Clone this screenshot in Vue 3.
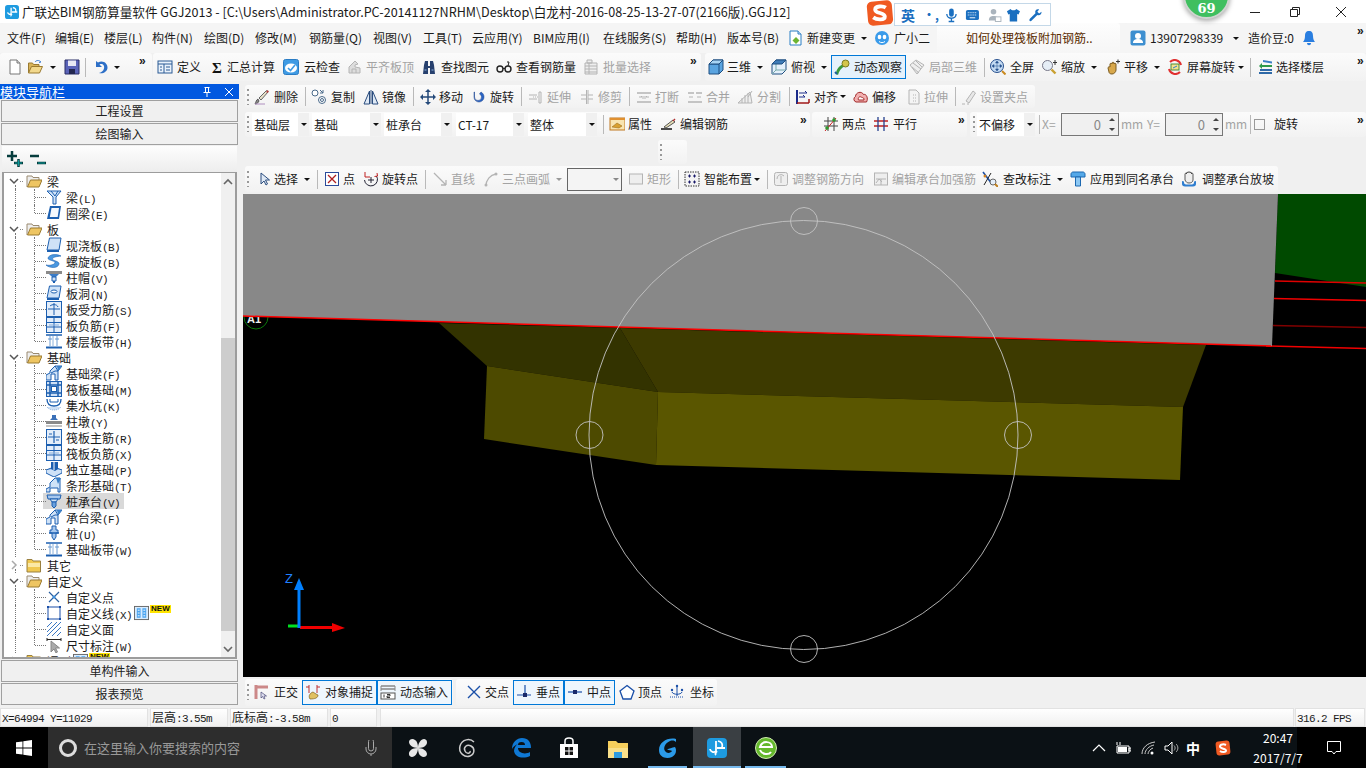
<template>
  <div class="app">
    <!-- title bar -->
    <header class="titlebar">
      <svg class="app-icon" viewBox="0 0 16 16" v-html="icons.glodon"></svg>
      <span class="title-text">广联达BIM钢筋算量软件 GGJ2013 - [C:\Users\Administrator.PC-20141127NRHM\Desktop\白龙村-2016-08-25-13-27-07(2166版).GGJ12]</span>
      <div class="win-btns">
        <svg viewBox="0 0 12 12" width="12" height="12"><path d="M1 6.5h10" stroke="#222" fill="none"/></svg>
        <svg viewBox="0 0 12 12" width="12" height="12"><path d="M1.5 3.5h7v7h-7zM3.5 3.5v-2h7v7h-2" stroke="#222" fill="none"/></svg>
        <svg viewBox="0 0 12 12" width="12" height="12"><path d="M1 1l10 10M11 1L1 11" stroke="#222" fill="none"/></svg>
      </div>
    </header>

    <!-- sogou input bar floats over the title -->
    <div class="ime">
      <svg class="ime-logo" viewBox="0 0 28 28">
        <rect x="1" y="1" width="26" height="25" rx="5" fill="#f05a22" transform="rotate(-5 14 14)"/>
        <path d="M20 8c-3-2-11-2-11 2s10 3 10 7-8 4-12 1" fill="none" stroke="#fff" stroke-width="4"/>
      </svg>
      <div class="ime-box">
        <span class="ime-en">英</span>
        <span class="ime-dot">•,</span>
        <svg viewBox="0 0 16 16" v-html="icons.imeMic"></svg>
        <svg viewBox="0 0 16 16" v-html="icons.imeKey"></svg>
        <svg viewBox="0 0 16 16" v-html="icons.imeUser"></svg>
        <svg viewBox="0 0 16 16" v-html="icons.imeShirt"></svg>
        <svg viewBox="0 0 16 16" v-html="icons.imeTool"></svg>
      </div>
    </div>
    <div class="score">69</div>

    <!-- all tool rows, placed in the grid by row -->
    <div
      v-for="row in toolRows"
      :key="row.id"
      class="row"
      :class="row.id"
      :style="{ gridRow: row.r, gridColumn: row.full ? '1 / 3' : '2' }"
    >
      <div
        v-for="(bar, bi) in row.bars"
        :key="bi"
        class="bar"
        :class="bar.cls"
        :style="{ marginLeft: bar.ml + 'px', width: bar.to - bar.from + 'px', paddingLeft: bar.pl + 'px' }"
      >
        <template v-for="(it, i) in bar.items" :key="i">
          <div
            class="item"
            :class="[it.kind, { off: it.off, on: it.on, plain: it.plain }]"
            :style="{ width: it.w + 'px', marginRight: it.mr + 'px' }"
          >
            <template v-if="it.kind === 'btn'">
              <span class="slot" :style="{ width: it.tx + 'px' }">
                <svg class="ico" viewBox="0 0 16 16" v-html="icons[it.icon]"></svg>
              </span>
              <span class="label">{{ it.text }}</span>
            </template>
            <span v-else-if="it.kind === 'text'" class="label" :style="{ color: it.color }">{{ it.text }}</span>
            <i v-else-if="it.kind === 'caret'" class="tri"></i>
            <i v-else-if="it.kind === 'sep'" class="sepline"></i>
            <i v-else-if="it.kind === 'grip'" class="dots"></i>
            <span v-else-if="it.kind === 'more'" class="chev">»</span>
            <template v-else-if="it.kind === 'combo'">
              <span class="combo-text">{{ it.text }}</span>
              <span class="combo-btn"><i class="tri"></i></span>
            </template>
            <template v-else-if="it.kind === 'spin'">
              <span class="spin-val">0</span>
              <span class="spin-btn"><i class="up"></i><i class="down"></i></span>
            </template>
            <i v-else-if="it.kind === 'check'" class="checkbox"></i>
          </div>
        </template>
      </div>
    </div>

    <!-- left navigation panel -->
    <aside class="nav">
      <div class="nav-head">
        <span>模块导航栏</span>
        <svg viewBox="0 0 12 12" width="12" height="12" class="pin"><path d="M3.5 1.5h5M4.5 1.5v5h3v-5M2.5 6.5h7M6 6.5v4.5" stroke="#fff" fill="none"/></svg>
        <svg viewBox="0 0 12 12" width="12" height="12"><path d="M2 2l8 8M10 2l-8 8" stroke="#fff" fill="none"/></svg>
      </div>
      <div class="nav-btn">工程设置</div>
      <div class="nav-btn">绘图输入</div>
      <div class="tree-tools">
        <svg viewBox="0 0 16 16" width="16" height="16"><path d="M0 5h10M5 0v10M7 12h9M11.500 8v8" stroke="#063d3d" stroke-width="2.500" fill="none"/><path d="M8 12h7M11.500 9v6" stroke="#0a9a9a" stroke-width="1" fill="none"/></svg>
        <svg viewBox="0 0 16 16" width="16" height="16"><path d="M0 5h9M7 12h9" stroke="#063d3d" stroke-width="2.500" fill="none"/><path d="M8 12h7" stroke="#0a9a9a" stroke-width="1"/></svg>
      </div>
      <div class="tree-box">
        <div class="tree-list">
          <div v-for="(n, i) in treeRows" :key="i" class="tree-row" :class="{ leaf: n.leaf, last: n.last, sel: n.sel }">
            <template v-if="n.leaf">
              <i class="line-v1"></i><i class="line-v2"></i><i class="line-h"></i>
              <span class="leaf-wrap" :class="{ sel: n.sel }">
                <svg class="ico" viewBox="0 0 16 16" v-html="icons[n.icon]"></svg>
                <span class="leaf-text">{{ n.label }}<span class="mono">{{ n.key }}</span></span>
              </span>
              <template v-if="n.isNew">
                <svg class="new-ico" viewBox="0 0 16 16" v-html="icons.newBox"></svg>
                <span class="new-tag">NEW</span>
              </template>
            </template>
            <template v-else>
              <i v-if="n.line" class="line-v1 cat"></i>
              <svg class="chevron" viewBox="0 0 10 10" width="10" height="10">
                <path :d="n.open ? 'M1 3l4 4 4-4' : 'M3 1l4 4-4 4'" fill="none" :stroke="n.open ? '#555' : '#aaa'" stroke-width="1.5"/>
              </svg>
              <i class="cat-dot"></i>
              <svg class="ico" viewBox="0 0 16 16" v-html="n.open ? icons.folderOpen : icons.folder"></svg>
              <span class="cat-text">{{ n.label }}</span>
              <template v-if="n.isNew">
                <svg class="new-ico" viewBox="0 0 16 16" v-html="icons.newBox"></svg>
                <span class="new-tag">NEW</span>
              </template>
            </template>
          </div>
        </div>
        <div class="scrollbar">
          <svg viewBox="0 0 10 10" width="10" height="10" class="sb-up"><path d="M1 7l4-4 4 4" fill="none" stroke="#666" stroke-width="1.6"/></svg>
          <div class="thumb"></div>
          <svg viewBox="0 0 10 10" width="10" height="10" class="sb-down"><path d="M1 3l4 4 4-4" fill="none" stroke="#666" stroke-width="1.6"/></svg>
        </div>
      </div>
      <div class="nav-btn">单构件输入</div>
      <div class="nav-btn">报表预览</div>
    </aside>

    <!-- 3D view -->
    <main class="view">
      <svg viewBox="243 194 1123 483" width="1123" height="483">
        <circle cx="256" cy="317" r="12" fill="none" stroke="#0a7a0a"/>
        <text x="247" y="323" class="axis-a">A1</text>
        <polygon points="1278,194 1366,194 1366,287 1275,273" fill="#004a00"/>
        <g stroke-width="1.500" fill="none">
          <path d="M1275 281L1366 283" stroke="#e00000"/>
          <path d="M1274 298.500L1366 300.500" stroke="#f00000"/>
          <path d="M1273 325.500L1366 327.500" stroke="#800000"/>
          <path d="M1266 346L1366 348.500" stroke="#f00000"/>
        </g>
        <polygon points="439,323 487,366 658,392 620,328" fill="#333300"/>
        <polygon points="620,328 1206,345 1183,407 658,392" fill="#3d3a00"/>
        <polygon points="487,366 658,392 656,465 484,439" fill="#4d4a00"/>
        <polygon points="658,392 1183,407 1180,480 656,465" fill="#5a5600"/>
        <polygon points="243,194 1278,194 1272,346 243,316" fill="#888888"/>
        <path d="M243 316L1272 346" stroke="#ff0000" stroke-width="1.500" fill="none"/>
        <g fill="none" stroke="#c4c4c4" stroke-width=".9">
          <circle cx="803.500" cy="435" r="214.500"/>
          <circle cx="804" cy="221" r="13.500"/>
          <circle cx="804" cy="649" r="13.500"/>
          <circle cx="589.500" cy="435" r="13.500"/>
          <circle cx="1018" cy="435" r="13.500"/>
        </g>
        <!-- axis gizmo -->
        <text x="285" y="583" class="axis-z">Z</text>
        <path d="M288 626h12" stroke="#00e020" stroke-width="3"/>
        <path d="M300 627.500h32" stroke="#f00000" stroke-width="3"/>
        <polygon points="332,623 345,628 332,632" fill="#f00000"/>
        <path d="M299 628V590" stroke="#0080ff" stroke-width="3"/>
        <polygon points="299,578 304,590 294,590" fill="#0080ff"/>
      </svg>
    </main>

    <!-- status bar -->
    <footer class="status">
      <div v-for="c in statusCells" :key="c.left" class="cell" :class="c.cls" :style="{ width: c.w + 'px', marginLeft: c.ml + 'px' }">
        <span v-if="c.cjk" class="cell-cjk">{{ c.cjk }}</span><span class="mono">{{ c.text }}</span>
      </div>
    </footer>

    <!-- windows taskbar -->
    <div class="taskbar">
      <div class="start">
        <svg viewBox="0 0 16 16" width="16" height="16"><path d="M0 2.300l6.500-.9v6.200H0zM7.300 1.300L16 0v7.600H7.300zM0 8.400h6.500v6.200L0 13.700zM7.300 8.400H16V16l-8.700-1.300z" fill="#fff"/></svg>
      </div>
      <div class="search">
        <i class="cortana"></i>
        <span>在这里输入你要搜索的内容</span>
        <svg viewBox="0 0 16 16" width="16" height="16" class="mic"><path d="M5.500 1.500a2.500 2.500 0 015 0v7a2.500 2.500 0 01-5 0zM3 7v2a5 5 0 0010 0V7M8 14v2" fill="none" stroke="#aaa"/></svg>
      </div>
      <div class="task-icons">
        <div v-for="a in taskApps" :key="a.id" class="task-app" :class="{ active: a.active, open: a.open }" :style="{ width: a.w + 'px', marginLeft: a.ml + 'px' }">
          <svg viewBox="0 0 24 24" width="24" height="24" v-html="icons[a.id]"></svg>
        </div>
      </div>
      <div class="tray">
        <svg viewBox="0 0 14 14" width="14" height="14" class="t1"><path d="M1 10l6-6 6 6" fill="none" stroke="#fff" stroke-width="1.200"/></svg>
        <svg viewBox="0 0 18 14" width="18" height="14" class="t2"><path d="M4 5h12v7H4z" fill="none" stroke="#fff"/><path d="M5 6h9v5H5z" fill="#fff"/><path d="M16 7h2v3h-2zM4 1v3M7 1v3" stroke="#fff" fill="none"/></svg>
        <svg viewBox="0 0 16 14" width="16" height="14" class="t3"><path d="M1 13c0-6 5-11 13-12M4 13c0-4 4-8 9-9M7 13c0-2 2-5 5-6" fill="none" stroke="#ccc"/><circle cx="11" cy="12" r="1.500" fill="#fff"/></svg>
        <svg viewBox="0 0 16 14" width="16" height="14" class="t4"><path d="M1 5h3l4-4v12l-4-4H1z" fill="none" stroke="#fff"/><path d="M10 4.500c1.500 1.500 1.500 3.500 0 5M12 3c2.500 2 2.500 6 0 8" fill="none" stroke="#aaa"/></svg>
        <span class="t5">中</span>
        <svg viewBox="0 0 16 16" width="16" height="16" class="t6"><rect x="1" y="1" width="14" height="14" rx="3" fill="#f05a22" transform="rotate(-6 8 8)"/><path d="M11 5c-2-1-6-1-6 1.500S11 8.500 11 10.500 7 12.500 5 11" fill="none" stroke="#fff" stroke-width="2"/></svg>
        <div class="clock"><span>20:47</span><span>2017/7/7</span></div>
        <div class="notify">
          <svg viewBox="0 0 16 16" width="16" height="16"><path d="M1.500 1.500h13v10h-4.500L8 14l-2-2.500H1.500z" fill="none" stroke="#fff"/></svg>
        </div>
      </div>
    </div>
  </div>
</template>

<script setup>
const B = '#1c5fb0'
const L = '#cfe2f7'
const G = '#b4b4b4'

// inline drawings of the toolbar, tree and taskbar icons
const icons = {
  glodon: `<rect x="0" y="0" width="16" height="16" rx="3" fill="#1e9be0"/><path d="M7 3v7a2.500 2.500 0 01-4-1.500M8 8h6M9 3c3 .5 4 2 3 5M7 13c-.5-1 0-2 1-3" fill="none" stroke="#fff" stroke-width="1.500"/>`,
  imeMic: `<rect x="5.500" y="1" width="5" height="9" rx="2.500" fill="#1a6fc0"/><path d="M3 7c0 6 10 6 10 0M8 12v3M5 15h6" fill="none" stroke="#1a6fc0" stroke-width="1.400"/>`,
  imeKey: `<rect x="1" y="2.500" width="14" height="11" rx="2" fill="#1a6fc0"/><path d="M3 5.500h10M3 8h10" stroke="#fff" stroke-dasharray="1 1"/><path d="M5 11h6" stroke="#fff"/>`,
  imeUser: `<circle cx="7" cy="4.500" r="3" fill="#aab4bd"/><path d="M2 14c0-4 2-5 5-5s5 1 5 5z" fill="#aab4bd"/><rect x="9" y="10" width="6" height="5" fill="#fff" stroke="#aab4bd"/>`,
  imeShirt: `<path d="M5 1.500L1 4l1.500 3.500L4 7v8h8V7l1.500.5L15 4l-4-2.500c-.500 2-5.500 2-6 0z" fill="#1a6fc0"/>`,
  imeTool: `<path d="M14.500 4.500l-2.500 2-2-2 2-2.500c-3-1-5 1.500-4 4L2 12c-1.500 2 .500 3.500 2 2l6-6c2.500 1 5-1 4.500-3.500z" fill="#1a6fc0"/>`,

  // file and edit
  doc: `<path d="M3 1h7l3 3v11H3z" fill="#fff" stroke="#777"/><path d="M10 1v3h3" fill="#ddd" stroke="#777"/>`,
  open: `<path d="M1.500 14V4h4l1 1.500h5.500V8" fill="#d8b45a" stroke="#9a7a30"/><path d="M1.500 14l3-6.500h11l-3 6.500z" fill="#f2d88c" stroke="#9a7a30"/><path d="M8 3c1.500-2 4-2 6 0l-2 .5" fill="none" stroke="#3a7bd0"/>`,
  save: `<path d="M1 1h14v14H1z" fill="#5a63b8" stroke="#2b2f66"/><path d="M4 1.500h8v5.500H4z" fill="#e8e8f4"/><path d="M5 10h6v5H5z" fill="#22264f"/>`,
  undo: `<path d="M3 2v6h6L6.500 5.500C9 4 12 6 11 9.500 10.500 12 8 13.500 6 14c4 1 8-1 8.500-5C15 4 9.500.500 5 3.500z" fill="#2d6fc7"/>`,
  define: `<rect x="1" y="2" width="14" height="12" fill="#eaf2fb" stroke="#2a5a94"/><path d="M1 5h14M7 5v9M9 8h4M9 11h4M3 8h2M3 11h2" stroke="#2a5a94" fill="none"/>`,
  sigma: `<text x="2" y="14" font-size="15" font-weight="700" font-family="Liberation Serif, serif" fill="#111">Σ</text>`,
  cloud: `<rect x=".500" y=".500" width="15" height="15" rx="2" fill="#3f9be4" stroke="#2a7cc4"/><ellipse cx="8" cy="9" rx="6" ry="4.500" fill="#fff"/><path d="M5 9l2.500 2.500L12 6" fill="none" stroke="#3f9be4" stroke-width="1.600"/>`,
  flat: `<path d="M2 14V8l6-6 3 3-3 1v2l5 1v5z" fill="#ddd" stroke="${G}"/><path d="M5 14v-4h4v4" fill="none" stroke="${G}"/>`,
  binoc: `<path d="M2 15l1-9 1-4h3v5h2V2h3l1 4 1 9h-5V9H7v6z" fill="#27406e"/><path d="M3.500 11h2M10.500 11h2" stroke="#8fb3e0"/>`,
  glasses: `<circle cx="4" cy="10" r="3" fill="none" stroke="#222" stroke-width="1.400"/><circle cx="12" cy="10" r="3" fill="none" stroke="#222" stroke-width="1.400"/><path d="M7 9.500h2M12 7l1-4h-2" fill="none" stroke="#222"/>`,
  batch: `<path d="M3 1h5v3H3zM1 4h12v11H1z" fill="#eee" stroke="${G}"/><path d="M1 7h12M1 10h12M1 13h12M5 4v11" stroke="${G}"/>`,
  cube: `<path d="M1 5l4-4h10v10l-4 4H1z" fill="#5aa4e0" stroke="#1e4e80"/><path d="M1 5h10v10M11 5l4-4" fill="none" stroke="#1e4e80"/><path d="M1 5l4-4h10l-4 4z" fill="#a8d4f4"/><path d="M1 5l4-4h10l-4 4z" fill="none" stroke="#1e4e80"/>`,
  cubeTop: `<path d="M1 5l4-4h10v10l-4 4H1z" fill="#e4f0fb" stroke="#1e4e80"/><path d="M5 1v10h10M5 11l-4 4" fill="none" stroke="#7aa"/><path d="M1 5l4-4h10l-4 4z" fill="#3f7cb8" stroke="#1e4e80"/>`,
  orbit: `<path d="M2 15c0-5 4-9 8-10l1 2c-4 2-6 5-7 9z" fill="#3b9a3b"/><circle cx="11.500" cy="4.500" r="3.500" fill="#d4c54a" stroke="#7a7a20"/><path d="M3 15L1 13" stroke="#1e5e9e" stroke-width="2"/>`,
  local3d: `<path d="M1 6l6-5 8 5-7 9z" fill="#eee" stroke="${G}"/><path d="M4 4l8 6M7 2l6 6M3 8l7 6" stroke="${G}"/>`,
  full: `<circle cx="7" cy="7" r="6.500" fill="#c4dbf3" stroke="#27508e"/><path d="M7 2.500v9M2.500 7h9M7 2l-1.500 2h3zM7 12l-1.500-2h3zM2 7l2-1.500v3zM12 7l-2-1.500v3z" fill="#27508e" stroke="#27508e" stroke-width=".5"/><path d="M12 12l3.500 3.500" stroke="#c98a20" stroke-width="2"/>`,
  zoomI: `<circle cx="6.500" cy="6.500" r="5" fill="#e6eef6" stroke="#778"/><path d="M10.500 10.500l4 4" stroke="#c9a030" stroke-width="2.400"/><path d="M14 1v5M12 3.500h4" stroke="#333"/>`,
  pan: `<path d="M3 9c0-1 1-1.500 2-1V5c0-1 2-1 2 0V4c0-1 2-1 2 0v1c0-1 2-1 2 0v6c0 2-2 4-4 4s-3-1-3-2z" fill="#d8a84c" stroke="#7a5a20"/><path d="M13 .500v4M11 2.500h4" stroke="#333"/>`,
  spinI: `<path d="M3 3a6.500 6.500 0 0111 3" fill="none" stroke="#e03030" stroke-width="2"/><path d="M13 13a6.500 6.500 0 01-11-3" fill="none" stroke="#e03030" stroke-width="2"/><rect x="4" y="5" width="8" height="6" fill="#f4e28c" stroke="#4a8a3a"/><path d="M6 9l4-2" stroke="#2a80d0"/>`,
  floors: `<path d="M5 1l9 1.500v2l-9-1.500z" fill="#3b7ec4"/><path d="M2 6h12v2H2z" fill="#2f9a4a"/><path d="M2 10h12v2H2zM1 13h13v2H1z" fill="#2f6aa8"/><path d="M1 7l3-3v6z" fill="#2f9a4a"/>`,

  // edit row
  brush: `<path d="M1 15c2 0 3-1 4-3l-1-2c-2 1-2 3-3 5z" fill="#888" stroke="#222" stroke-width=".6"/><path d="M5 9l2 2 7-8-1.500-1.500z" fill="#e8e0c8" stroke="#666"/><path d="M12 3l1.500-2L15 2.500 13.500 4z" fill="#b04040"/><path d="M1 15h10" stroke="#b090c0"/>`,
  copy: `<circle cx="4" cy="4" r="3" fill="#fff" stroke="#4a6a8a"/><circle cx="11" cy="11" r="3.500" fill="#fff" stroke="#4a6a8a"/><circle cx="11" cy="11" r="1.500" fill="none" stroke="#4a6a8a"/><path d="M9 1l3 3M12 1v3h-3" stroke="#4a6a8a" fill="none"/>`,
  mirror: `<path d="M1 15L6.500 2v13zM15 15L9.500 2v13z" fill="#dfe9f5" stroke="#2b4d7e"/><path d="M8 1v14" stroke="#2b4d7e"/>`,
  move: `<path d="M8 1v14M1 8h14" stroke="#254a7a" stroke-width="1.500"/><path d="M8 0l-3 3h6zM8 16l-3-3h6zM0 8l3-3v6zM16 8l-3-3v6z" fill="#254a7a"/>`,
  rot: `<path d="M3 3v5a5 5 0 0010 0c0-2-1-4-3-5l-1.500 2c1.500 1 2 2 2 3a3.500 3.500 0 01-7 0V3z" fill="#2a64c4" stroke="#1a408a" stroke-width=".5"/>`,
  extend: `<path d="M1 6h8M1 10h8M11 3h2v11h-2z" fill="none" stroke="${G}"/><path d="M5 8h5" stroke="${G}" stroke-dasharray="1 1"/>`,
  trim: `<path d="M2 6h5M2 10h5M9 6h5M9 10h5M7.500 1v14M9 1v14" fill="none" stroke="${G}"/>`,
  brk: `<path d="M1 4h14M1 13h14" stroke="${G}" stroke-width="1.500"/><path d="M3 8h3l-1-1M13 8h-3l1-1M7 7v3M9 7v3" fill="none" stroke="${G}"/>`,
  merge: `<path d="M1 4h6M9 4h6M1 13h14" stroke="${G}" stroke-width="1.500"/><path d="M2 8h4M14 8h-4" fill="none" stroke="${G}"/>`,
  split: `<path d="M1 14h14L13 3 1 14z" fill="#eee" stroke="${G}"/><path d="M5 14V9M8 14V6M11 14V4M11 8l4-6" stroke="${G}"/>`,
  align: `<path d="M2 1v14" stroke="#1a2a8a" stroke-width="2"/><path d="M2 14h12M14 10v4" stroke="#a01818" stroke-width="1.500"/><path d="M4 4h8l-2-2M4 8h6l-2-2" fill="none" stroke="#1a2a8a"/>`,
  offset: `<path d="M3 13a3 3 0 01-.5-5.500c0-4 6-6 8-2 3-1 5 4 3 7.500z" fill="#f2b0b0" stroke="#a02828"/><path d="M5.500 11c-1-2 1-4 2.500-3s3 0 3 3z" fill="#fff" stroke="#a02828"/>`,
  stretch: `<path d="M3 1h7l3 3v11H3z" fill="#f4f4f4" stroke="${G}"/><path d="M7 6h3M7 9h3M7 12h3" stroke="${G}" stroke-dasharray="1 1"/>`,
  setgrip: `<path d="M1 15h3M6 15h2" stroke="${G}"/><path d="M5 12l7-10 2.500 2L8 14z" fill="#e8e8e8" stroke="${G}"/>`,

  // property row
  prop: `<rect x="1" y="2" width="15" height="12" fill="#f8e4b0" stroke="#c07820"/><path d="M1 2h15v2H1z" fill="#e09030"/><path d="M3 11l5-4 5 3-3 2z" fill="#d8a030" stroke="#906010" stroke-width=".5"/>`,
  editbar: `<path d="M1 13h11" stroke="#111" stroke-width="1.500"/><path d="M4 11l9-7 2 2-9 6z" fill="#e8e0b8" stroke="#555"/><path d="M12.500 4.500l2-2 1 1-2 2z" fill="#b03030"/>`,
  twoPt: `<path d="M1 5h14M1 10h14M5 1v14M11 1v14" stroke="#444"/><path d="M2 15L13 2" stroke="#d02020"/><circle cx="4" cy="12" r="1.800" fill="#2f9a2f"/><circle cx="11" cy="4" r="1.800" fill="#2f9a2f"/>`,
  para: `<path d="M1 5h14M1 10h14" stroke="#c02020" stroke-width="1.300"/><path d="M5 1v14M11 1v14" stroke="#27408e" stroke-width="1.300"/>`,

  // draw row
  arrow: `<path d="M5 2v11l3-3 2 4 1.500-1-2-4h4z" fill="#dfe9f5" stroke="#2b4d7e"/>`,
  point: `<rect x="1.500" y="1.500" width="13" height="13" fill="#fff" stroke="#2a4a9a"/><path d="M4 4l8 8M12 4l-8 8" stroke="#b02020" stroke-width="1.300"/>`,
  rotPt: `<path d="M13.500 5A6.500 6.500 0 111.500 9" fill="none" stroke="#223"/><path d="M8 6v6M5 9h6" stroke="#223"/><path d="M2 1v5h5M14 2l.5 3-3 .5" fill="none" stroke="#c02020"/>`,
  lineI: `<path d="M2 2l12 12M14 14V9M14 14H9" fill="none" stroke="${G}" stroke-width="1.300"/>`,
  arcI: `<path d="M3 15c0-6 4-11 10-12" fill="none" stroke="${G}" stroke-width="1.300"/><circle cx="3" cy="14" r="1.500" fill="${G}"/><circle cx="13" cy="3" r="1.500" fill="${G}"/>`,
  rectI: `<rect x="1.500" y="3" width="13" height="10" fill="#eee" stroke="${G}"/>`,
  smart: `<rect x="1" y="1" width="14" height="14" fill="#f4f4f4" stroke="#333" stroke-dasharray="1.500 1"/><path d="M4 5h3M5.500 3.500v3M9 5h3M10.500 3.500v3M4 11h3M5.500 9.500v3M9 11h3M10.500 9.500v3" stroke="#1a1a6a"/>`,
  adjBar: `<rect x="1.500" y="1.500" width="13" height="13" rx="2" fill="#eee" stroke="${G}"/><path d="M4 8a4 4 0 017-3M8 5v7" fill="none" stroke="${G}"/>`,
  adjCap: `<rect x="1.500" y="2" width="13" height="12" fill="#eee" stroke="${G}"/><path d="M3 12l3-4 3 3M8 8v6M3 8h10" fill="none" stroke="${G}"/>`,
  checkMark: `<path d="M1 1l9 12" stroke="#1a4fa8" stroke-width="1.500"/><path d="M9 2L2 14" stroke="#222"/><circle cx="3" cy="5" r="1.500" fill="#d08020"/><circle cx="11" cy="11" r="3" fill="#e4eefa" stroke="#666"/><path d="M13 13l3 3" stroke="#c08020" stroke-width="2"/>`,
  applyCap: `<path d="M1 3c0-1 1-2 2-2h10c1 0 2 1 2 2v3H1z" fill="#54a8e8" stroke="#1c68b0"/><path d="M5.500 6h5v9h-5z" fill="#8cc8f4" stroke="#1c68b0"/>`,
  hand: `<path d="M4 9V3c0-1 1.500-1 1.500 0V2c0-1 1.500-1 1.500 0v-.5C7 .500 9 .500 9 1.500V2c0-1 1.500-1 1.500 0v1c0-1 1.500-1 1.500 0v6c0 2-2 3-4 3s-3-1-4-3z" fill="#eee" stroke="#333" stroke-width=".8"/><path d="M1 10v3c0 1.500 1 2.500 3 2.500h8c2 0 3-1 3-2.500v-3l-2 .5v1c0 1-1 2-2 2H5c-1 0-2-1-2-2v-1z" fill="#2f7ed0"/>`,

  // snap row
  ortho: `<path d="M3 1v14" stroke="#c88" stroke-width="3"/><path d="M2 3h13" stroke="#c88" stroke-width="3"/><path d="M8 8v6l1.500-1.500L11 15l1-.5-1-2.500h2.500z" fill="#dde" stroke="#336" stroke-width=".6"/>`,
  snapI: `<path d="M4 1v8M12 1v8M1 3h3M12 3h3" stroke="#c03030"/><path d="M5 15c-2-3 0-6 3-7l3 2 2 1c0 3-3 4-8 4z" fill="#e0c060" stroke="#806020" stroke-width=".7"/>`,
  dyn: `<path d="M1 2h14M1 5h14" stroke="#888" stroke-width="1.300"/><path d="M1 2v5M15 2v5" stroke="#888"/><rect x="1" y="9" width="14" height="6" fill="#fff" stroke="#555"/><path d="M4 10.500v3M7 10.500h3v1.500h-3v1.500h3" fill="none" stroke="#222" stroke-width=".9"/>`,
  crossPt: `<path d="M2 2l12 12M14 2L2 14" stroke="#1a4fa8" stroke-width="1.400"/>`,
  perp: `<path d="M1 11h14M9 1v10" stroke="#1a4fa8" stroke-width="1.200"/><rect x="7" y="9" width="4" height="4" fill="#1a2a6a"/>`,
  mid: `<path d="M1 8h14" stroke="#1a4fa8" stroke-width="1.200"/><rect x="6" y="6" width="4" height="4" fill="#1a2a6a"/>`,
  vertex: `<path d="M8 1.500L15 7l-3 8H4L1 7z" fill="#fff" stroke="#1a4fa8" stroke-width="1.300"/>`,
  coord: `<path d="M8 3v9M3 8c1 3 9 3 10 0" fill="none" stroke="#1a4fa8"/><path d="M1 13h14" stroke="#1a4fa8" stroke-dasharray="1 1"/><circle cx="3" cy="6" r="1.200" fill="#1a4fa8"/><circle cx="13" cy="6" r="1.200" fill="#1a4fa8"/><circle cx="8" cy="2" r="1.200" fill="#1a4fa8"/>`,

  // menu row
  newChange: `<path d="M2 1h8l3 3v11H2z" fill="#fff" stroke="#2a7ec4"/><path d="M10 1v3h3" fill="#cfe2f7" stroke="#2a7ec4"/><path d="M8 7l3.500 3.500L8 14l-3.500-3.500z" fill="#6cb432"/>`,
  robot: `<circle cx="8" cy="8" r="7" fill="#3a9bea"/><ellipse cx="5.500" cy="7" rx="1.800" ry="2.200" fill="#fff"/><ellipse cx="10.500" cy="7" rx="1.800" ry="2.200" fill="#fff"/><path d="M5 11.500c2 1.500 4 1.500 6 0" fill="none" stroke="#fff"/>`,
  user: `<rect x=".500" y=".500" width="15" height="15" rx="2" fill="#3d8fd0"/><circle cx="8" cy="6" r="3" fill="#fff"/><path d="M3 13c0-3 2-4 5-4s5 1 5 4z" fill="#fff"/>`,
  bell: `<path d="M8 1c-3 0-4 2-4 5 0 3-1 5-2 6h12c-1-1-2-3-2-6 0-3-1-5-4-5zM6 13c0 3 4 3 4 0z" fill="#2a7ee0"/>`,

  // tree
  folder: `<path d="M1 5V2.500h5L7 4h7.500v11H1z" fill="#f0c850" stroke="#9a8040"/><path d="M2 6h12v4H2z" fill="#fbe9a6"/>`,
  folderOpen: `<path d="M1 14V3h5l1 1.500h6V7" fill="#eee" stroke="#9a8a70"/><path d="M1.500 14l3-7H16l-3 7z" fill="#eec562" stroke="#9a7a30"/>`,
  beam: `<path d="M1 2h14l-5 6v7H7V8z" fill="${L}" stroke="${B}"/><path d="M5 2l4 5M12 2L9 7" stroke="${B}"/>`,
  ring: `<path d="M4 1h11l-2 13H1z" fill="${B}"/><path d="M5.500 3H13l-1.300 9H3.800z" fill="#f4f8fd"/>`,
  cast: `<path d="M3.500 1H15l-2 12H1z" fill="${L}" stroke="${B}"/><path d="M1 13h12v2H1z" fill="${B}"/>`,
  spiral: `<path d="M15 3C10 .5 3 1.500 2 5c-.5 2.500 7 2.500 7 4.500S4 13 0 12c3 3 12 4 13-1 .5-3-6.500-3-6.500-5S11 3.500 15 3z" fill="#4a98e0" stroke="${B}" stroke-width=".6"/>`,
  capital: `<path d="M0 2h16v3H0z" fill="#8a8a8a"/><path d="M3 5h10l-3 3H6z" fill="#3a7cc8"/><path d="M6 8h4v4H6z" fill="${L}" stroke="${B}"/><path d="M7 12h2v2H7z" fill="${B}"/>`,
  hole: `<path d="M3.500 1H15l-2 12H1z" fill="${L}" stroke="${B}"/><ellipse cx="8" cy="6.500" rx="3" ry="1.500" fill="#fff" stroke="${B}"/><path d="M1 13h12v2H1z" fill="${B}"/>`,
  slabBar: `<rect x=".500" y=".500" width="15" height="15" fill="#e4eefa" stroke="${B}"/><path d="M8 2v12M2 8h12M4 5c2-2 7-2 8 1" fill="none" stroke="${B}"/>`,
  negBar: `<rect x=".500" y=".500" width="15" height="15" fill="#e4eefa" stroke="${B}"/><path d="M1 5.500h14M1 10h14M8 1v14" fill="none" stroke="${B}"/><path d="M3 8h10" stroke="#8ab0dc"/>`,
  strip: `<path d="M0 2h16" stroke="${B}" stroke-width="1.500"/><path d="M0 14.500h16" stroke="${B}" stroke-width="2"/><path d="M4 3v10M11 3v10M2 6h4M9 6h4" stroke="#6a9ad0"/><path d="M7 3v10" stroke="#8ab0dc"/>`,
  fBeam: `<path d="M0 15V10l4-2V6l5-5h7l-4 5v9H9V9H5v6z" fill="${L}" stroke="${B}"/><path d="M9 1l3 5M12 6h-3L5 8" fill="none" stroke="${B}"/><path d="M11 1h5l-4 5z" fill="#3a80c8"/>`,
  raft: `<rect x=".500" y=".500" width="15" height="15" fill="#cfe0f5" stroke="${B}"/><path d="M4 1v14M12 1v14M1 4h14M1 12h14" stroke="${B}" stroke-width="1.500"/><rect x="5.500" y="5.500" width="5" height="5" fill="#fff" stroke="${B}"/>`,
  pit: `<path d="M1 2c0 5 2 7 7 7s7-2 7-7" fill="none" stroke="${B}" stroke-width="1.300"/><path d="M4 2v3h8V2" fill="none" stroke="${B}"/><path d="M1 10c3 4 11 4 14 0" fill="#cfe0f5" stroke="#8ab0dc" stroke-dasharray="1 1"/>`,
  pier: `<path d="M6 2h4v3l2 2H4l2-2z" fill="#3a70b8"/><path d="M0 8h16v3H0z" fill="#8a8a8a"/><path d="M0 13h16" stroke="#888"/>`,
  mainBar: `<rect x=".500" y=".500" width="15" height="15" fill="#e4eefa" stroke="${B}"/><path d="M8 2v12M2 8h12M3 5h3M10 11h3" fill="none" stroke="${B}" stroke-width="1.200"/>`,
  isolated: `<path d="M0 9l8-3 8 3-8 4z" fill="#a8c8ee" stroke="${B}"/><path d="M0 9v3l8 4 8-4V9" fill="${L}" stroke="${B}"/><path d="M5 1h7v7l-3 2-4-2z" fill="${B}"/><path d="M8 1v8" stroke="#fff"/>`,
  stripFoot: `<path d="M0 15v-3l4-2V6l5-5h5v14h-2V11H4v4z" fill="${L}" stroke="${B}"/><path d="M10 1h5l-3 6z" fill="#3a80c8"/>`,
  capI: `<path d="M1 2h14l-1 4H2z" fill="#a8c8ee" stroke="${B}"/><path d="M4 6h8l-2 3H6z" fill="${L}" stroke="${B}"/><path d="M6 9h4v4l-2 2-2-2z" fill="#6aa0dc" stroke="${B}"/>`,
  pile: `<path d="M6 1h4v4h2v3h-2v4l-2 3-2-3V8H4V5h2z" fill="#a8c8ee" stroke="${B}"/><path d="M3 8h10" stroke="${B}" stroke-width="1.500"/>`,
  custPt: `<path d="M3 3l10 10M13 3L3 13" stroke="#2a5fa0" stroke-width="1.200"/><circle cx="8" cy="8" r="1.500" fill="#3a90e0"/>`,
  custLine: `<rect x="2" y="2" width="12" height="12" fill="none" stroke="#1a4fa8"/><path d="M1 1h2v2H1zM13 1h2v2h-2zM1 13h2v2H1zM13 13h2v2h-2z" fill="#1a4fa8"/>`,
  custFace: `<path d="M1 6l5-5M1 11L11 1M1 15L15 1M6 15l9-9M11 15l4-4" stroke="#3a78c4"/>`,
  dim: `<path d="M1 1v3M15 1v3M1 2.500h14" stroke="#222"/><path d="M5 4v11l3-3 2 4 1.500-1-2-4h4z" fill="#aaa" stroke="#888"/>`,
  newBox: `<rect x=".500" y="1" width="15" height="14" fill="#d8ecff" stroke="#666"/><path d="M3 3h4v10H3zM9 3h4v10H9z" fill="#4aa4f0"/><path d="M4 5h2M4 8h2M4 11h2M10 5h2M10 8h2M10 11h2" stroke="#fff"/>`,

  // taskbar
  fan: `<path d="M12 12C7 12 3 9 3 6c0-3 4-4 6-2 2 1 3 4 3 8zM12 12c0-5 3-9 6-9 3 0 4 4 2 6-1 2-4 3-8 3zM12 12c5 0 9 3 9 6 0 3-4 4-6 2-2-1-3-4-3-8zM12 12c0 5-3 9-6 9-3 0-4-4-2-6 1-2 4-3 8-3z" fill="#e8e8e8"/>`,
  swirl: `<path d="M19 6c-4-4-12-3-14 4s5 12 10 10 5-8 1-10-8 1-6 5 6 2 5 0" fill="none" stroke="#ccc" stroke-width="1.500"/>`,
  edge: `<path d="M3 13C3 6 8 2 13 2c6 0 9 4 9 10H9c0 5 7 7 12 4v4c-6 3-15 2-16-5 0-3 2-6 4-7-3 1-5 3-6 5zM9 9h7c0-2-1-3-3.500-3S9 7 9 9z" fill="#0f78d4"/>`,
  store: `<path d="M3 8h18v14H3z" fill="#fff"/><path d="M8 8V5c0-4 8-4 8 0v3" fill="none" stroke="#fff" stroke-width="1.500"/><path d="M8 11h3.500v3.500H8zM12.500 11H16v3.500h-3.500zM8 15.500h3.500V19H8zM12.500 15.500H16V19h-3.500z" fill="#111"/>`,
  explorer: `<path d="M2 5h8l2 2h10v15H2z" fill="#f6cf5c"/><path d="M2 12h20v10H2z" fill="#f9e08a"/><path d="M8 16h8v6H8z" fill="#2e9be0"/>`,
  gsoft: `<path d="M20 3C12 1 3 6 3 14s8 9 13 7c4-2 5-7 3-10-3 1-6 1-8 3 2 0 4 0 5 1-1 2-5 3-7 0s0-8 5-10c3-1 5 0 6 1z" fill="#2b9ae8"/>`,
  glodonTask: `<rect x="2" y="2" width="20" height="20" rx="4" fill="#1e9be0"/><path d="M11 5v10a3.500 3.500 0 01-6-2M12 12h8M13 5c4 1 5 3 4 7M11 19c-1-1 0-3 1-4" fill="none" stroke="#fff" stroke-width="1.800"/>`,
  greenE: `<circle cx="12" cy="12" r="10.500" fill="#64b82c" stroke="#cfeab0"/><path d="M6 11h12c0-6-10-7-12 0zM6 14c2 5 9 5 11 2" fill="none" stroke="#fff" stroke-width="2"/>`
}

// each row is a list of bars, and each item knows the x where it starts
const OFF = { off: true }
const b = (x, icon, tx, text, o) => ({ x, kind: 'btn', icon, tx: tx - x, text, ...o })
const t = (x, text, o) => ({ x, kind: 'text', text, ...o })
const c = (x) => ({ x, kind: 'caret' })
const s = (x) => ({ x, kind: 'sep' })
const g = (x) => ({ x, kind: 'grip' })
const m = (x) => ({ x, kind: 'more' })
const combo = (x, w, text, o) => ({ x, kind: 'combo', w, text, ...o })
const spin = (x) => ({ x, kind: 'spin', w: 58 })

function bar(from, to, items, cls) {
  const laid = items.map((it, i) => {
    const end = items[i + 1] ? items[i + 1].x : to
    const w = it.w || end - it.x
    return { ...it, w, mr: end - it.x - w }
  })
  return { from, to, items: laid, cls, pl: items.length ? items[0].x - from : 0 }
}

function row(id, r, full, bars) {
  let prev = full ? 0 : 243
  const placed = bars.map((br) => {
    const ml = br.from - prev
    prev = br.to
    return { ...br, ml }
  })
  return { id, r, full, bars: placed }
}

const toolRows = [
  row('menu', 2, true, [
    bar(0, 934, [
      t(7, '文件(F)'), t(55, '编辑(E)'), t(104, '楼层(L)'), t(152, '构件(N)'), t(204, '绘图(D)'),
      t(255, '修改(M)'), t(309, '钢筋量(Q)'), t(373, '视图(V)'), t(423, '工具(T)'), t(472, '云应用(Y)'),
      t(533, 'BIM应用(I)'), t(603, '在线服务(S)'), t(676, '帮助(H)'), t(727, '版本号(B)'),
      b(788, 'newChange', 807, '新建变更'), c(864), b(874, 'robot', 894, '广小二')
    ]),
    bar(937, 1120, [t(966, '如何处理筏板附加钢筋..', { color: '#5a2c00' })], 'lite'),
    bar(1124, 1366, [
      b(1130, 'user', 1150, '13907298339'), c(1236), t(1248, '造价豆:0'),
      b(1301, 'bell', 1320, ''), m(1357)
    ])
  ]),
  row('tb1', 3, true, [
    bar(0, 152, [
      b(7, 'doc', 26, ''), b(27, 'open', 50, ''), c(53), b(64, 'save', 84, ''), s(85),
      b(93, 'undo', 112, ''), c(117), m(139)
    ]),
    bar(153, 701, [
      b(157, 'define', 177, '定义'), b(210, 'sigma', 227, '汇总计算'), b(283, 'cloud', 304, '云检查'),
      b(347, 'flat', 366, '平齐板顶', OFF), b(421, 'binoc', 441, '查找图元'), b(496, 'glasses', 516, '查看钢筋量'),
      b(584, 'batch', 603, '批量选择', OFF), m(690)
    ]),
    bar(705, 1366, [
      b(708, 'cube', 727, '三维'), c(760), b(771, 'cubeTop', 791, '俯视'), c(824),
      b(831, 'orbit', 854, '动态观察', { on: true, w: 75 }), b(909, 'local3d', 929, '局部三维', OFF), s(984),
      b(990, 'full', 1010, '全屏'), b(1041, 'zoomI', 1061, '缩放'), c(1094), b(1105, 'pan', 1124, '平移'), c(1157),
      b(1167, 'spinI', 1187, '屏幕旋转'), c(1241), s(1250), b(1258, 'floors', 1276, '选择楼层'), m(1357)
    ])
  ]),
  row('r2', 4, false, [
    bar(245, 1035, [
      g(247), b(254, 'brush', 274, '删除'), s(305), b(311, 'copy', 331, '复制'), b(363, 'mirror', 382, '镜像'), s(413),
      b(420, 'move', 439, '移动'), b(471, 'rot', 490, '旋转'), s(521), b(528, 'extend', 547, '延伸', OFF),
      b(579, 'trim', 598, '修剪', OFF), s(629), b(636, 'brk', 655, '打断', OFF), b(687, 'merge', 706, '合并', OFF),
      b(737, 'split', 757, '分割', OFF), s(789), b(795, 'align', 814, '对齐'), c(843), b(853, 'offset', 872, '偏移'),
      b(906, 'stretch', 924, '拉伸', OFF), s(955), b(961, 'setgrip', 980, '设置夹点', OFF)
    ])
  ]),
  row('r3', 5, false, [
    bar(245, 810, [
      g(247), combo(252, 57, '基础层'), combo(312, 69, '基础'), combo(384, 68, '桩承台'), combo(456, 68, 'CT-17'),
      combo(528, 69, '整体'), s(603), b(609, 'prop', 628, '属性'), b(660, 'editbar', 680, '编辑钢筋'), m(800)
    ]),
    bar(812, 967, [b(823, 'twoPt', 842, '两点'), b(873, 'para', 893, '平行'), m(958)]),
    bar(970, 1366, [
      g(973), combo(977, 58, '不偏移'), s(1039), t(1042, 'X=', OFF), spin(1061), t(1121, 'mm', OFF), t(1147, 'Y=', OFF),
      spin(1165), t(1225, 'mm', OFF), s(1250), { x: 1254, kind: 'check' }, t(1274, '旋转'), m(1357)
    ])
  ]),
  row('r35', 6, false, [bar(658, 687, [g(660)])]),
  row('r4', 7, false, [
    bar(245, 1278, [
      g(247), b(256, 'arrow', 274, '选择'), c(307), s(317), b(324, 'point', 343, '点'), b(363, 'rotPt', 382, '旋转点'), s(425),
      b(432, 'lineI', 451, '直线', OFF), b(483, 'arcI', 502, '三点画弧', OFF), { x: 559, kind: 'caret', off: true },
      combo(567, 55, '', { plain: true }), b(628, 'rectI', 647, '矩形', OFF), s(678), b(684, 'smart', 704, '智能布置'), c(757), s(767),
      b(773, 'adjBar', 792, '调整钢筋方向', OFF), b(873, 'adjCap', 892, '编辑承台加强筋', OFF),
      b(982, 'checkMark', 1003, '查改标注'), c(1060), b(1070, 'applyCap', 1090, '应用到同名承台'), b(1181, 'hand', 1202, '调整承台放坡')
    ])
  ]),
  row('snap', 9, false, [
    bar(245, 453, [
      g(247), b(253, 'ortho', 274, '正交'),
      b(302, 'snapI', 325, '对象捕捉', { on: true }), b(377, 'dyn', 400, '动态输入', { on: true, w: 75 })
    ]),
    bar(456, 717, [
      b(466, 'crossPt', 485, '交点'), b(513, 'perp', 536, '垂点', { on: true }), b(564, 'mid', 587, '中点', { on: true, w: 51 }),
      b(619, 'vertex', 638, '顶点'), b(669, 'coord', 690, '坐标')
    ])
  ])
]

// model tree, row by row
const leaf = (label, key, icon, extra) => ({ leaf: true, label, key, icon, ...extra })
const cat = (label, open, extra) => ({ label, open, ...extra })
const treeRows = [
  cat('梁', true, { line: true }),
  leaf('梁', '(L)', 'beam'),
  leaf('圈梁', '(E)', 'ring', { last: true }),
  cat('板', true, { line: true }),
  leaf('现浇板', '(B)', 'cast'),
  leaf('螺旋板', '(B)', 'spiral'),
  leaf('柱帽', '(V)', 'capital'),
  leaf('板洞', '(N)', 'hole'),
  leaf('板受力筋', '(S)', 'slabBar'),
  leaf('板负筋', '(F)', 'negBar'),
  leaf('楼层板带', '(H)', 'strip', { last: true }),
  cat('基础', true, { line: true }),
  leaf('基础梁', '(F)', 'fBeam'),
  leaf('筏板基础', '(M)', 'raft'),
  leaf('集水坑', '(K)', 'pit'),
  leaf('柱墩', '(Y)', 'pier'),
  leaf('筏板主筋', '(R)', 'mainBar'),
  leaf('筏板负筋', '(X)', 'negBar'),
  leaf('独立基础', '(P)', 'isolated'),
  leaf('条形基础', '(T)', 'stripFoot'),
  leaf('桩承台', '(V)', 'capI', { sel: true }),
  leaf('承台梁', '(F)', 'fBeam'),
  leaf('桩', '(U)', 'pile'),
  leaf('基础板带', '(W)', 'strip', { last: true }),
  cat('其它', false, { line: true }),
  cat('自定义', true, { line: true }),
  leaf('自定义点', '', 'custPt'),
  leaf('自定义线', '(X)', 'custLine', { isNew: true }),
  leaf('自定义面', '', 'custFace'),
  leaf('尺寸标注', '(W)', 'dim', { last: true }),
  cat('通则', false, { isNew: true })
]

const statusCells = [
  { left: 'xy', text: 'X=64994 Y=11029', w: 148, ml: 0 },
  { left: 'h', cjk: '层高', text: ':3.55m', w: 78, ml: 2 },
  { left: 'b', cjk: '底标高', text: ':-3.58m', w: 98, ml: 2 },
  { left: 'z', text: '0', w: 47, ml: 2 },
  { left: 'e', text: '', w: 914, ml: 3, cls: 'wide' },
  { left: 'fps', text: '316.2 FPS', w: 70, ml: 1 }
]

const taskApps = [
  { id: 'fan', w: 50, ml: 0 },
  { id: 'swirl', w: 48, ml: 0 },
  { id: 'edge', w: 48, ml: 6 },
  { id: 'store', w: 48, ml: 0 },
  { id: 'explorer', w: 50, ml: 0 },
  { id: 'gsoft', w: 39, ml: 5, open: true },
  { id: 'glodonTask', w: 48, ml: 6, active: true },
  { id: 'greenE', w: 41, ml: 4, open: true }
]
</script>

<style>
html,
body {
  margin: 0;
  padding: 0;
  background: #f0f0f0;
}
</style>

<style scoped>
.app {
  position: relative;
  width: 1366px;
  height: 768px;
  overflow: hidden;
  display: grid;
  grid-template-columns: 243px 1123px;
  grid-template-rows: 23px 30px 31px 26px 28px 27px 29px 483px 30px 20px 41px;
  background: #f0f0f0;
  font-family: "Noto Sans CJK SC", "Liberation Sans", sans-serif;
  font-size: 12px;
  color: #1a1a1a;
}

/* title bar */
.titlebar {
  grid-row: 1;
  grid-column: 1 / 3;
  background: #fff;
  display: flex;
  align-items: center;
  padding-left: 5px;
}

.app-icon {
  width: 14px;
  height: 14px;
  margin-right: 3px;
}

.title-text {
  white-space: nowrap;
  font-size: 12.6px;
}

.win-btns {
  margin-left: auto;
  display: flex;
  padding-right: 19px;
}

.win-btns svg:first-child {
  margin-right: 28px;
}

.win-btns svg:nth-child(2) {
  margin-right: 34px;
}

.ime {
  position: absolute;
  left: 866px;
  top: 0;
  display: flex;
  align-items: flex-start;
  z-index: 5;
}

.ime-logo {
  width: 28px;
  height: 27px;
  position: relative;
  z-index: 1;
}

.ime-box {
  width: 157px;
  height: 23px;
  margin-top: 3px;
  background: #fff;
  border: 1px solid #c4d8e8;
  display: flex;
  align-items: center;
  padding-left: 6px;
  box-sizing: border-box;
}

.ime-box svg {
  width: 16px;
  height: 16px;
  margin-right: 7px;
}

.ime-box svg:nth-of-type(3) {
  margin-right: 4px;
}

.ime-en {
  color: #1a6fc0;
  font-weight: 700;
  font-size: 14px;
  margin-right: 8px;
}

.ime-dot {
  color: #1a6fc0;
  font-weight: 700;
  width: 20px;
  margin-right: 2px;
}

.score {
  position: absolute;
  left: 1183px;
  top: -28px;
  width: 47px;
  height: 47px;
  box-sizing: border-box;
  border-radius: 50%;
  background: #3fbf5f;
  border: 2px solid #cfd4d0;
  box-shadow: 0 2px 5px rgba(0, 0, 0, 0.35);
  color: #fff;
  font-family: "DejaVu Serif", serif;
  font-weight: 700;
  font-size: 13px;
  text-align: center;
  line-height: 16px;
  padding-top: 27px;
  z-index: 6;
}

/* tool rows */
.row {
  display: flex;
  align-items: center;
  background: #f0f0f0;
  min-width: 0;
}

.row.menu {
  background: #f5f5f5;
}

.row.tb1,
.row.r2,
.row.r4 {
  align-items: flex-start;
}

.bar {
  height: calc(100% - 3px);
  display: flex;
  align-items: center;
  box-sizing: border-box;
  flex: none;
  border-radius: 3px;
  background: linear-gradient(180deg, #fbfbfb, #f2f2f2);
}

.tb1 .bar {
  height: 28px;
}

.r2 .bar {
  height: 23px;
  margin-top: 1px;
}

.r4 .bar {
  height: 26px;
  margin-top: 1px;
}

.menu .bar {
  background: #f5f5f5;
  height: 100%;
}

.menu .bar.lite {
  background: linear-gradient(180deg, #fdfdfd, #f6f6f6);
}

.item {
  flex: none;
  display: flex;
  align-items: center;
  height: 100%;
  box-sizing: border-box;
  white-space: nowrap;
}

.slot {
  flex: none;
  display: flex;
  align-items: center;
  box-sizing: border-box;
}

.ico {
  width: 16px;
  height: 16px;
  flex: none;
  display: block;
}

.label {
  line-height: 16px;
}

.item.off .label {
  color: #a3a3a3;
}

.item.btn.on {
  height: 24px;
  border: 1px solid #0078d7;
  background: #e5f1fb;
}

.item.btn.on .slot {
  padding-left: 3px;
  margin-left: -1px;
}

.snap .item.btn.on {
  height: 25px;
  background: #eef6fd;
}

.tri {
  display: block;
  width: 0;
  height: 0;
  margin-left: -3px;
  border-left: 3px solid transparent;
  border-right: 3px solid transparent;
  border-top: 3px solid #111;
}

.item.caret.off .tri {
  border-top-color: #999;
}

.sepline {
  display: block;
  width: 1px;
  height: 19px;
  background: #b9b9b9;
}

.dots {
  display: block;
  width: 2px;
  height: 16px;
  background: repeating-linear-gradient(180deg, #999 0 2px, transparent 2px 5px);
}

.chev {
  align-self: flex-start;
  font-family: "Liberation Sans", sans-serif;
  font-weight: 700;
  font-size: 12px;
  line-height: 14px;
  margin-top: 1px;
}

.item.combo {
  height: 23px;
  background: #fff;
  justify-content: space-between;
}

.combo-text {
  padding-left: 2px;
}

.combo-btn {
  width: 11px;
  height: 100%;
  background: #f0f0f0;
  display: flex;
  align-items: center;
  justify-content: center;
}

.combo-btn .tri {
  margin: 0;
}

.item.combo.plain {
  background: #f4f4f4;
  border: 1px solid #666;
}

.item.combo.plain .combo-btn {
  background: transparent;
}

.item.combo.plain .tri {
  border-top-color: #888;
}

.item.spin {
  height: 23px;
  border: 1px solid #777;
  background: #f0f0f0;
  justify-content: flex-end;
}

.spin-val {
  color: #888;
  font-size: 13px;
  padding-right: 4px;
}

.spin-btn {
  width: 13px;
  height: 100%;
  display: flex;
  flex-direction: column;
  align-items: center;
  justify-content: center;
  gap: 7px;
}

.spin-btn .up,
.spin-btn .down {
  display: block;
  width: 0;
  height: 0;
  border-left: 3px solid transparent;
  border-right: 3px solid transparent;
}

.spin-btn .up {
  border-bottom: 3px solid #444;
}

.spin-btn .down {
  border-top: 3px solid #444;
}

.checkbox {
  display: block;
  width: 11px;
  height: 11px;
  border: 1px solid #999;
  box-sizing: border-box;
}

/* navigation panel */
.nav {
  grid-column: 1;
  grid-row: 4 / 10;
  display: flex;
  flex-direction: column;
  width: 239px;
}

.nav-head {
  height: 15px;
  background: #0158e0;
  color: #fff;
  font-size: 13px;
  line-height: 15px;
  display: flex;
  align-items: center;
  padding-right: 4px;
  margin-bottom: 1px;
}

.nav-head .pin {
  margin-left: auto;
  margin-right: 10px;
}

.nav-btn {
  height: 22px;
  margin: 0 1px 1px;
  line-height: 20px;
  border: 1px solid #a0a0a0;
  box-sizing: border-box;
  background: #f0f0f0;
  text-align: center;
  color: #222;
  flex: none;
}

.tree-tools {
  height: 26px;
  margin: 0 2px;
  background: linear-gradient(180deg, #fdfdfd, #ededed);
  display: flex;
  align-items: center;
  gap: 7px;
  padding-left: 5px;
  flex: none;
}

.tree-box {
  height: 487px;
  margin: 0 2px 1px;
  border: 2px solid #9c9c9c;
  border-width: 1px 2px 2px;
  background: #fff;
  display: flex;
  box-sizing: border-box;
  overflow: hidden;
  flex: none;
}

.tree-list {
  width: 215px;
  flex: none;
  overflow: hidden;
}

.tree-row {
  position: relative;
  height: 16px;
  display: flex;
  align-items: center;
  white-space: nowrap;
}

.chevron {
  margin-left: 5px;
  flex: none;
}

.cat-dot {
  width: 3px;
  height: 0;
  border-top: 1px dotted #888;
  margin: 0 3px 0 1px;
  flex: none;
}

.cat-text {
  margin-left: 5px;
}

.leaf-wrap {
  display: flex;
  align-items: center;
  margin-left: 42px;
  height: 16px;
  flex: none;
}

.leaf-wrap.sel {
  background: #d9d9d9;
  margin-left: 39px;
  padding-left: 3px;
  width: 81px;
  box-sizing: border-box;
}

.leaf-text {
  margin-left: 4px;
}

.mono {
  font-family: "Liberation Mono", monospace;
  font-size: 11px;
  letter-spacing: -0.6px;
}

.line-v1,
.line-v2,
.line-h {
  position: absolute;
  display: block;
}

.line-v1 {
  left: 11px;
  top: 0;
  height: 16px;
  border-left: 1px dotted #777;
}

.line-v1.cat {
  top: 12px;
  height: 4px;
}

.line-v2 {
  left: 30px;
  top: 0;
  height: 16px;
  border-left: 1px dotted #777;
}

.last .line-v2 {
  height: 8px;
}

.line-h {
  left: 31px;
  top: 8px;
  width: 11px;
  border-top: 1px dotted #777;
}

.new-ico {
  width: 15px;
  height: 16px;
  margin-left: 2px;
  flex: none;
}

.new-tag {
  font-family: "Liberation Sans", sans-serif;
  font-weight: 700;
  font-size: 8px;
  line-height: 8px;
  background: #ffe400;
  padding: 0 1px;
  align-self: flex-start;
  margin-left: 1px;
  color: #111;
}

.scrollbar {
  position: relative;
  width: 15px;
  margin-left: 2px;
  background: #f0f0f0;
  flex: none;
}

.sb-up,
.sb-down {
  position: absolute;
  left: 2px;
}

.sb-up {
  top: 4px;
}

.sb-down {
  bottom: 3px;
}

.thumb {
  position: absolute;
  left: 0;
  width: 100%;
  top: 165px;
  height: 293px;
  background: #cdcdcd;
}

/* 3D view */
.view {
  grid-column: 2;
  grid-row: 8;
  background: #000;
  overflow: hidden;
}

.view svg {
  display: block;
}

.axis-a {
  font: 700 11px "Liberation Sans", sans-serif;
  fill: #eee;
}

.axis-z {
  font: 13px "Liberation Sans", sans-serif;
  fill: #2080ff;
}

/* status */
.status {
  grid-column: 1 / 3;
  grid-row: 10;
  display: flex;
  padding-top: 1px;
}

.cell {
  height: 19px;
  box-sizing: border-box;
  border: 1px solid #e2e2e2;
  background: linear-gradient(180deg, #fff, #f0f0f0);
  padding-left: 1px;
  line-height: 16px;
  white-space: nowrap;
  flex: none;
}

.cell-cjk {
  font-size: 12px;
}

/* taskbar */
.taskbar {
  grid-column: 1 / 3;
  grid-row: 11;
  background: #0b1115;
  display: flex;
  color: #fff;
}

.start {
  width: 48px;
  background: #000;
  display: flex;
  align-items: center;
  justify-content: center;
  flex: none;
}

.search {
  width: 344px;
  background: #2d2d2d;
  display: flex;
  align-items: center;
  color: #999;
  font-size: 13px;
  flex: none;
}

.cortana {
  display: block;
  width: 12px;
  height: 12px;
  margin: 0 7px 0 11px;
  border: 3px solid #ddd;
  border-radius: 50%;
}

.search .mic {
  margin-left: auto;
  margin-right: 13px;
}

.task-icons {
  display: flex;
  width: 394px;
  margin-left: 1px;
  flex: none;
}

.task-app {
  display: flex;
  align-items: center;
  justify-content: center;
  box-sizing: border-box;
  flex: none;
}

.task-app.open {
  border-bottom: 2px solid #76b9ed;
  padding-top: 2px;
}

.task-app.active {
  background: #3a3f43;
  border-bottom: 2px solid #76b9ed;
  padding-top: 2px;
}

.tray {
  flex: 1;
  display: flex;
  align-items: center;
  background: linear-gradient(90deg, #0b1115 510px, #000 510px);
}

.t1 {
  margin-left: 305px;
}

.t2 {
  margin-left: 7px;
}

.t3 {
  margin-left: 10px;
}

.t4 {
  margin-left: 7px;
}

.t5 {
  margin-left: 6px;
  font-size: 14px;
  font-weight: 700;
}

.t6 {
  margin-left: 15px;
}

.clock {
  margin-left: 14px;
  width: 66px;
  display: flex;
  flex-direction: column;
  align-items: center;
  font-size: 12px;
  line-height: 20px;
  flex: none;
}

.notify {
  margin-left: auto;
  width: 56px;
  padding-left: 15px;
  box-sizing: border-box;
  flex: none;
}

.notify svg {
  display: block;
}
</style>
